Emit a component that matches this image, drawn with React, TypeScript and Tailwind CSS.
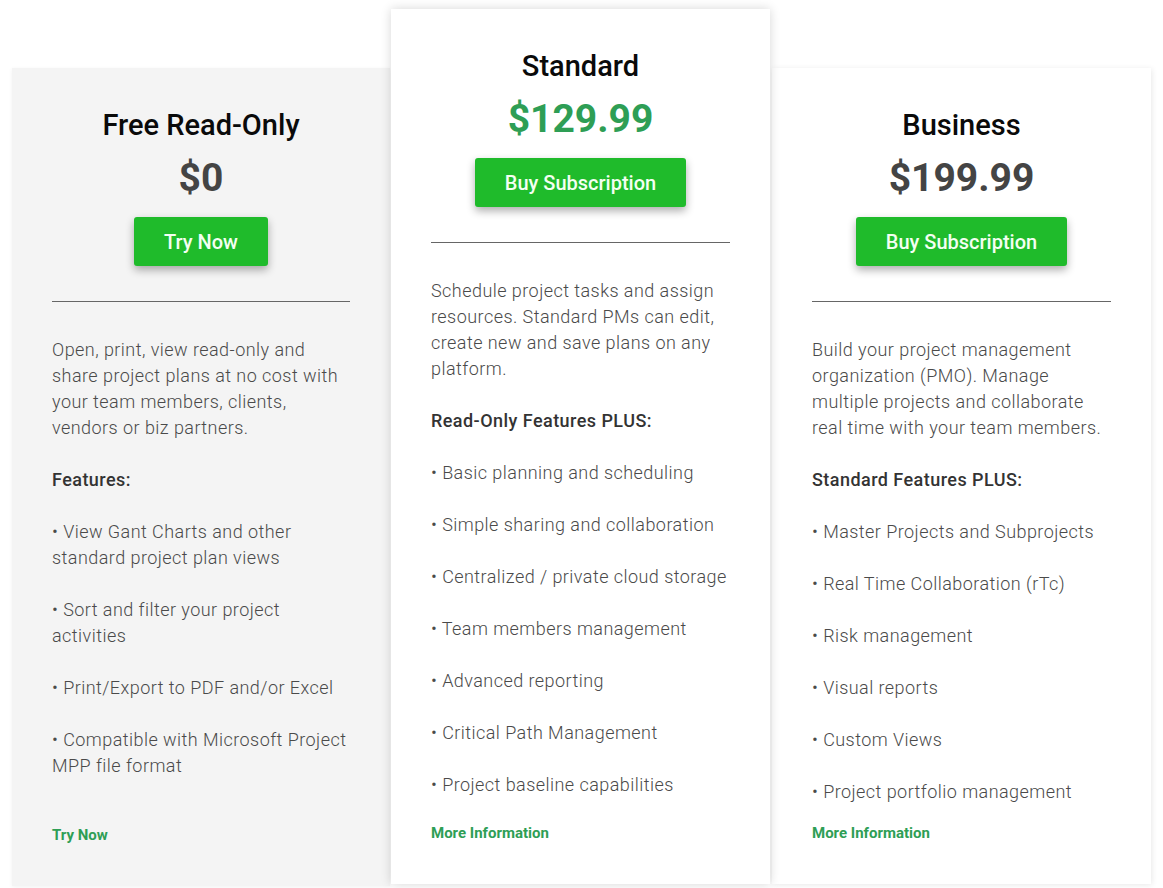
const PLANS = [
  {
    id: 'free',
    title: 'Free Read-Only',
    price: '$0',
    cta: 'Try Now',
    description:
      'Open, print, view read-only and share project plans at no cost with your team members, clients, vendors or biz partners.',
    heading: 'Features:',
    features: [
      'View Gant Charts and other standard project plan views',
      'Sort and filter your project activities',
      'Print/Export to PDF and/or Excel',
      'Compatible with Microsoft Project MPP file format',
    ],
    link: 'Try Now',
  },
  {
    id: 'standard',
    title: 'Standard',
    price: '$129.99',
    cta: 'Buy Subscription',
    description:
      'Schedule project tasks and assign resources. Standard PMs can edit, create new and save plans on any platform.',
    heading: 'Read-Only Features PLUS:',
    features: [
      'Basic planning and scheduling',
      'Simple sharing and collaboration',
      'Centralized / private cloud storage',
      'Team members management',
      'Advanced reporting',
      'Critical Path Management',
      'Project baseline capabilities',
    ],
    link: 'More Information',
  },
  {
    id: 'business',
    title: 'Business',
    price: '$199.99',
    cta: 'Buy Subscription',
    description:
      'Build your project management organization (PMO). Manage multiple projects and collaborate real time with your team members.',
    heading: 'Standard Features PLUS:',
    features: [
      'Master Projects and Subprojects',
      'Real Time Collaboration (rTc)',
      'Risk management',
      'Visual reports',
      'Custom Views',
      'Project portfolio management',
    ],
    link: 'More Information',
  },
];

const CARD_STYLES: Record<string, string> = {
  free: 'w-[378px] h-[818px] mt-[59px] bg-[#f4f4f4] shadow-[0_1px_4px_rgba(0,0,0,0.06)]',
  standard:
    'w-[379px] h-[875px] ml-[1px] bg-white relative z-10 shadow-[0_0_10px_rgba(0,0,0,0.16)]',
  business:
    'w-[379px] h-[816px] mt-[59px] ml-[2px] bg-white shadow-[1px_1px_6px_rgba(0,0,0,0.09)]',
};

function PlanCard({ plan }: { plan: (typeof PLANS)[number] }) {
  const featured = plan.id === 'standard';
  return (
    <div className={`${CARD_STYLES[plan.id]} flex flex-col px-[40px] pt-[40px] pb-[41px]`}>
      <h2 className="text-center text-[29px] leading-[34px] font-medium text-[#0a0a0a]">{plan.title}</h2>
      <div
        className={`mt-[12px] text-center text-[39px] leading-[48px] font-bold ${
          featured ? 'text-[#2e9e55]' : 'text-[#444]'
        }`}
      >
        {plan.price}
      </div>
      <div className="mt-[15px] flex justify-center">
        <button className="h-[49px] px-[30px] rounded-[3px] bg-[#1fbb2b] text-[20px] font-medium text-[#f3fff2] shadow-[0_4px_8px_rgba(0,0,0,0.32)]">
          {plan.cta}
        </button>
      </div>
      <hr className="mt-[35px] border-0 border-t border-[#666]" />
      <div className="mt-[35px] text-[18px] leading-[26px] tracking-[0.45px] font-light text-[#4a4a4a]">
        <p>{plan.description}</p>
        <p className="mt-[26px] font-medium text-[#333]">{plan.heading}</p>
        {plan.features.map((f) => (
          <p key={f} className="mt-[26px]">
            • {f}
          </p>
        ))}
      </div>
      <a href="#" className="mt-auto text-[15px] leading-[20px] font-bold text-[#2e9e55]">
        {plan.link}
      </a>
    </div>
  );
}

export default function App() {
  return (
    <div className="w-[1163px] h-[888px] bg-white font-['Roboto',sans-serif] overflow-hidden">
      <div className="flex items-start pt-[9px] pl-[12px]">
        {PLANS.map((plan) => (
          <PlanCard key={plan.id} plan={plan} />
        ))}
      </div>
    </div>
  );
}
